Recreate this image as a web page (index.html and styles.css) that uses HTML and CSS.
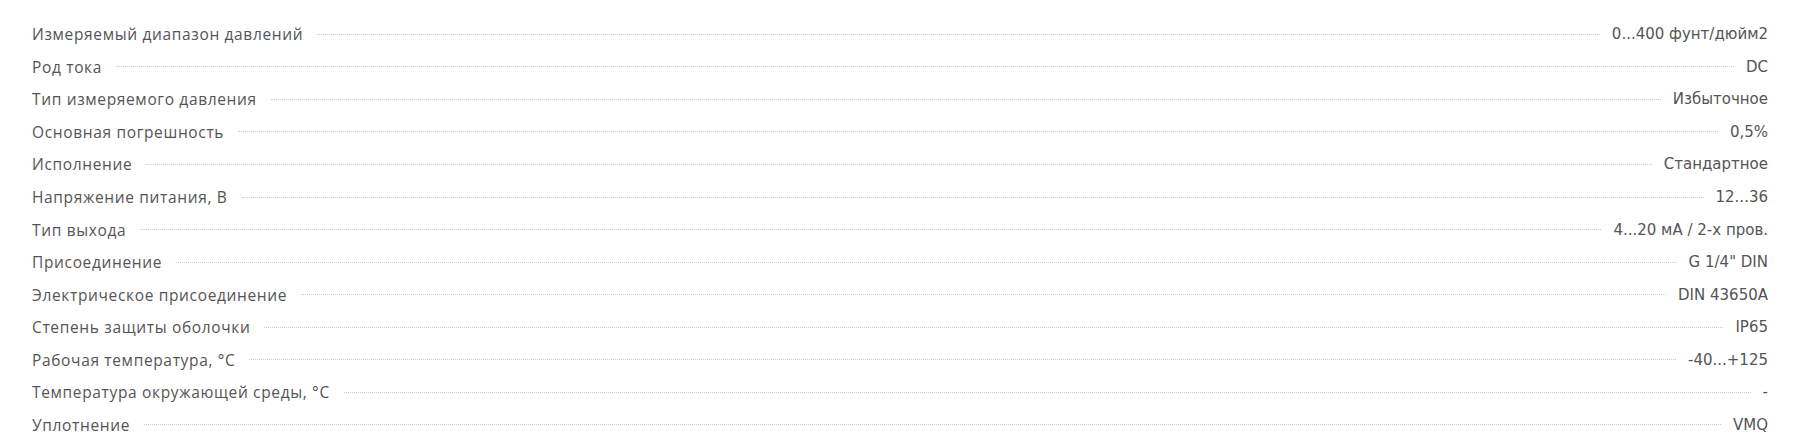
FILE: index.html
```html
<!DOCTYPE html>
<html lang="ru">
<head>
<meta charset="utf-8">
<link rel="stylesheet" href="styles.css">
</head>
<body>
<div class="specs">
  <div class="row"><span class="name">Измеряемый диапазон давлений</span><span class="dots"></span><span class="val">0...400 фунт/дюйм2</span></div>
  <div class="row"><span class="name">Род тока</span><span class="dots"></span><span class="val">DC</span></div>
  <div class="row"><span class="name">Тип измеряемого давления</span><span class="dots"></span><span class="val">Избыточное</span></div>
  <div class="row"><span class="name">Основная погрешность</span><span class="dots"></span><span class="val">0,5%</span></div>
  <div class="row"><span class="name">Исполнение</span><span class="dots"></span><span class="val">Стандартное</span></div>
  <div class="row"><span class="name">Напряжение питания, В</span><span class="dots"></span><span class="val">12...36</span></div>
  <div class="row"><span class="name">Тип выхода</span><span class="dots"></span><span class="val">4...20 мА / 2-х пров.</span></div>
  <div class="row"><span class="name">Присоединение</span><span class="dots"></span><span class="val">G 1/4" DIN</span></div>
  <div class="row"><span class="name">Электрическое присоединение</span><span class="dots"></span><span class="val">DIN 43650A</span></div>
  <div class="row"><span class="name">Степень защиты оболочки</span><span class="dots"></span><span class="val">IP65</span></div>
  <div class="row"><span class="name">Рабочая температура, °C</span><span class="dots"></span><span class="val">-40...+125</span></div>
  <div class="row"><span class="name">Температура окружающей среды, °C</span><span class="dots"></span><span class="val">-</span></div>
  <div class="row"><span class="name">Уплотнение</span><span class="dots"></span><span class="val">VMQ</span></div>
</div>
</body>
</html>
```
FILE: styles.css
```css
html, body {
  margin: 0;
  padding: 0;
  background: #fff;
}
.specs {
  padding: 18px 41px 0 32px;
  display: flex;
  flex-direction: column;
}
.row {
  display: flex;
  align-items: center;
  height: 32.55px;
  color: #555;
}
.name {
  font-family: "Open Sans", sans-serif;
  font-size: 15.5px;
  letter-spacing: 0.65px;
}
.val {
  font-family: "DejaVu Sans", Verdana, sans-serif;
  font-size: 15px;
}
.dots {
  flex: 1;
  border-bottom: 1px dotted #ccc;
  margin: 0 12px 0 14px;
}
```
